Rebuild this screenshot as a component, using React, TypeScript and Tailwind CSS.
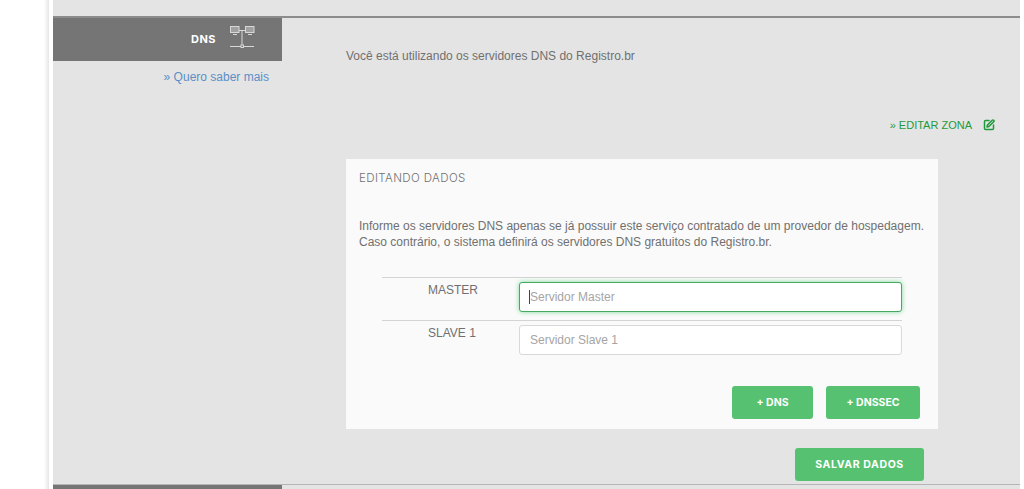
import React from 'react';
import { SquarePen } from 'lucide-react';

const montserrat = { fontFamily: '"Inter", "Liberation Sans", sans-serif' };

function NetworkIcon() {
  return (
    <svg width="26" height="24" viewBox="0 0 26 24" fill="none" stroke="#d8d8d8" strokeWidth="1">
      <rect x="1.5" y="1.5" width="8.5" height="6" fill="#a0a0a0" />
      <rect x="16.5" y="1.5" width="8.5" height="6" fill="#a0a0a0" />
      <path d="M4 9.5h4M19 9.5h4M10 5.5h6.5M13 5.5V21M1 21.5h24" />
      <rect x="12" y="20" width="2.5" height="2.5" fill="#777" />
    </svg>
  );
}

function ServerRow({ label, placeholder, focused }: { label: string; placeholder: string; focused?: boolean }) {
  return (
    <div className="flex border-t border-[#d4d4d4] h-[43px] pl-[46px] pt-[3px]">
      <div className="w-[91px] text-[12px] leading-[18px] text-[#707070]">{label}</div>
      <div
        className={`w-[383px] h-[30px] mt-[1px] rounded-[3px] bg-white border flex items-center px-[10px] text-[12px] text-[#a5a5a5] ${
          focused ? 'border-[#46a862] shadow-[0_0_5px_#7fdc9a]' : 'border-[#d9d9d9]'
        }`}
      >
        {focused && <span className="w-px h-[14px] bg-[#444] -ml-px" />}
        {placeholder}
      </div>
    </div>
  );
}

function GreenButton({ children, className }: { children: React.ReactNode; className: string }) {
  return (
    <button
      style={montserrat}
      className={`rounded-[3px] bg-[#56c271] text-white text-[10.5px] font-bold flex items-center justify-center ${className}`}
    >
      {children}
    </button>
  );
}

export default function App() {
  return (
    <div
      className="h-[489px] w-[1024px] overflow-hidden bg-white flex text-[#707070]"
      style={{ fontFamily: '"Liberation Sans", Arial, sans-serif' }}
    >
      {/* Left gutter */}
      <div className="w-[53px] shrink-0 flex justify-end pr-[4px]">
        <div className="w-[5px] h-full bg-gradient-to-r from-white to-[#e6e6e6]" />
      </div>

      <div className="w-[967px] shrink-0 bg-[#e4e4e4] flex flex-col">
        <div className="h-[16px] shrink-0" />

        <div className="border-t-2 border-[#8c8c8c] flex h-[468px] shrink-0">
          {/* Sidebar */}
          <div className="w-[229px] shrink-0">
            <div className="h-[43px] bg-[#757575] flex items-start justify-end pr-[27px] pt-[7px] gap-[13px]">
              <span style={montserrat} className="text-white text-[11px] font-bold tracking-[0.5px] mt-[6px]">
                DNS
              </span>
              <NetworkIcon />
            </div>
            <div className="text-right pr-[13px] pt-[8px] text-[12px] leading-[16px] text-[#5b8fc7]">» Quero saber mais</div>
          </div>

          {/* Content */}
          <div className="flex-1 pl-[64px] pt-[30px]">
            <p className="text-[12px] leading-[16px]">Você está utilizando os servidores DNS do Registro.br</p>

            <div className="flex justify-end items-center h-[16px] mt-[53px] pr-[25px] gap-[11px] text-[#1f9a3a] text-[11px]">
              <span>» EDITAR ZONA</span>
              <SquarePen className="w-[12px] h-[12px]" strokeWidth={3} />
            </div>

            <div className="w-[592px] h-[270px] mt-[26px] bg-[#fafafa] pt-[11px]">
              <div style={montserrat} className="pl-[13px] text-[11.5px] leading-[16px] font-light tracking-[0.4px]">
                EDITANDO DADOS
              </div>
              <p className="pl-[13px] pt-[32px] text-[12px] leading-[16px]">
                Informe os servidores DNS apenas se já possuir este serviço contratado de um provedor de hospedagem.
                <br />
                Caso contrário, o sistema definirá os servidores DNS gratuitos do Registro.br.
              </p>
              <div className="mt-[27px] ml-[36px] w-[520px]">
                <ServerRow label="MASTER" placeholder="Servidor Master" focused />
                <ServerRow label="SLAVE 1" placeholder="Servidor Slave 1" />
              </div>
              <div className="flex justify-end gap-[13px] pr-[18px] mt-[23px]">
                <GreenButton className="w-[81px] h-[33px]">+ DNS</GreenButton>
                <GreenButton className="w-[94px] h-[33px]">+ DNSSEC</GreenButton>
              </div>
            </div>

            <div className="flex justify-end pr-[96px] mt-[19px]">
              <GreenButton className="w-[129px] h-[33px] tracking-[0.6px]">SALVAR DADOS</GreenButton>
            </div>
          </div>
        </div>

        {/* Next section */}
        <div className="border-t border-[#b5b5b5] flex h-[10px] shrink-0">
          <div className="w-[229px] bg-[#757575]" />
        </div>
      </div>
    </div>
  );
}
